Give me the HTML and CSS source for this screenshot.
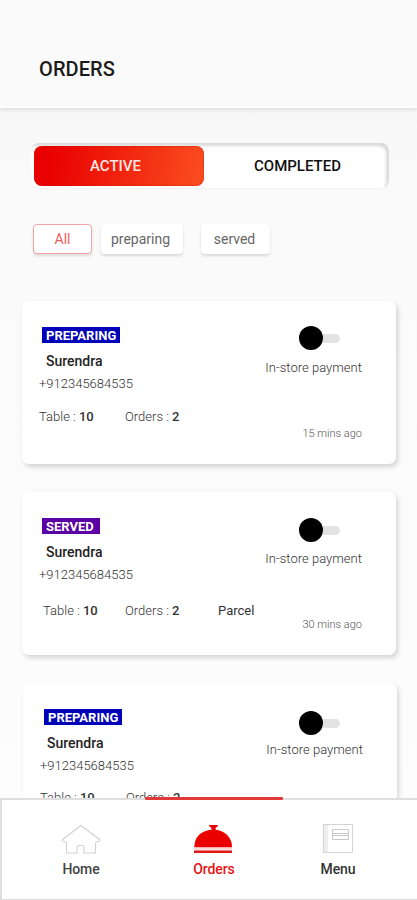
FILE: index.html
```html
<!DOCTYPE html>
<html lang="en">
<head>
<meta charset="utf-8">
<title>Orders</title>
<link rel="stylesheet" href="styles.css">
</head>
<body>
<div class="app">
  <header class="header"><h1>ORDERS</h1></header>
  <main class="content">
    <div class="tabs">
      <button class="tab active">ACTIVE</button>
      <button class="tab">COMPLETED</button>
    </div>
    <div class="filters">
      <button class="chip all">All</button>
      <button class="chip preparing">preparing</button>
      <button class="chip served">served</button>
    </div>
    <div class="cards">
      <article class="card">
        <div class="top">
          <div class="who">
            <span class="badge">PREPARING</span>
            <div class="name">Surendra</div>
            <div class="phone">+912345684535</div>
          </div>
          <div class="pay">
            <div class="toggle"><i class="knob"></i><i class="track"></i></div>
            <span>In-store payment</span>
          </div>
        </div>
        <div class="details"><span>Table : <b>10</b></span><span>Orders : <b>2</b></span></div>
        <div class="ago">15 mins ago</div>
      </article>
      <article class="card second">
        <div class="top">
          <div class="who">
            <span class="badge purple">SERVED</span>
            <div class="name">Surendra</div>
            <div class="phone">+912345684535</div>
          </div>
          <div class="pay">
            <div class="toggle"><i class="knob"></i><i class="track"></i></div>
            <span>In-store payment</span>
          </div>
        </div>
        <div class="details"><span>Table : <b>10</b></span><span>Orders : <b>2</b></span><span class="parcel">Parcel</span></div>
        <div class="ago">30 mins ago</div>
      </article>
      <article class="card third">
        <div class="top">
          <div class="who">
            <span class="badge">PREPARING</span>
            <div class="name">Surendra</div>
            <div class="phone">+912345684535</div>
          </div>
          <div class="pay">
            <div class="toggle"><i class="knob"></i><i class="track"></i></div>
            <span>In-store payment</span>
          </div>
        </div>
        <div class="details"><span>Table : <b>10</b></span><span>Orders : <b>2</b></span></div>
      </article>
    </div>
  </main>
  <nav class="nav">
    <a class="item home">
      <svg width="42" height="32" viewBox="0 0 42 32" fill="none" stroke="#d2d2d2" stroke-width="1.1"><path d="M21 1.500 L2.500 15.500 Q1.500 17 3.500 17.500 Q6 17.500 6.500 19 V29 H17 V23 Q17 21.500 19 21.500 H22 Q24 21.500 24 23 V29 H35.500 V19 Q36 17.500 38.500 17.500 Q40.500 17 39.500 15.500 Z"/></svg>
      <span>Home</span>
    </a>
    <a class="item current">
      <svg width="42" height="32" viewBox="0 0 42 32" fill="#eb0000"><path d="M16 1 H25 Q25 3 22.600 3.800 V5.800 C31 6.800 37 12 38.600 19 Q39 21.500 39 23.500 H1.200 Q1.200 21.500 1.800 19 C3 12 9 6.800 18.400 5.800 V3.800 Q16 3 16 1 Z"/><rect x="1" y="23.500" width="38" height="3" fill="#f9dcda"/><rect x="1" y="26.500" width="38" height="2.500" fill="#dc1a14"/></svg>
      <span>Orders</span>
    </a>
    <a class="item menu">
      <svg width="42" height="32" viewBox="0 0 42 32" fill="none" stroke="#d4d4d4"><rect x="7" y="0.500" width="4" height="28" fill="#eee" stroke="none"/><path d="M6 0.500 H35.500 V28.500 H6 M6.500 0.500 V29"/><path stroke="#c8c8c8" d="M15.500 5.500 H31.500 V15.500 H15.500 Z M15.500 9.500 H31.500 M15.500 11.500 H31.500"/></svg>
      <span>Menu</span>
    </a>
    <i class="marker"></i>
  </nav>
</div>
</body>
</html>
```

FILE: styles.css
```css
* { box-sizing: border-box; }
body { margin: 0; font-family: Roboto, sans-serif; background: #fafafa; }
button { border: 0; background: none; padding: 0; font-family: inherit; }
.app { width: 417px; height: 900px; display: flex; flex-direction: column; overflow: hidden; background: #fafafa; }
.header { position: relative; z-index: 1; background: #fafafa; height: 108px; flex: none; padding: 57px 0 0 39px; border-bottom: 2px solid #fff; box-shadow: 0 1px 5px rgba(0,0,0,.14); }
h1 { margin: 0; font-size: 20px; line-height: 24px; font-weight: 500; color: #1b1b1b; letter-spacing: .1px; }
.content { flex: 1; min-height: 0; overflow: hidden; padding: 35px 0 0; background: linear-gradient(#f7f7f7, #fafafa 60px, #fafafa 180px, #fdfdfd); }
.tabs { margin-left: 31px; width: 358px; height: 45px; padding: 3px; display: flex; background: #fff; border-radius: 8px; box-shadow: inset -3px 3px 3px #dadada, 0 1px 2px #f1f1f1; }
.tab { flex: 1; font-size: 15px; font-weight: 500; color: #111; line-height: 40px; padding-left: 5px; letter-spacing: 0; }
.tab.active { flex: none; width: 170px; height: 40px; padding: 0 7px 0 0; border-radius: 8px; color: #ffe9e5; background: linear-gradient(100deg, #e90000 10%, #fb4e20); box-shadow: inset 0 0 2px #c31a08; }
.filters { margin: 36px 0 0 33px; display: flex; height: 30px; }
.chip { height: 30px; border-radius: 4px; background: #fff; color: #666; font-size: 14px; font-weight: 400; line-height: 28px; box-shadow: 0 2px 3px rgba(0,0,0,.13); }
.all { width: 59px; color: #ec5c60; border: 1px solid #f2a4a8; }
.preparing { width: 82px; margin-left: 9px; padding-right: 3px; }
.served { width: 69px; margin-left: 18px; padding-right: 2px; }
.cards { padding: 47px 0 0 22px; display: flex; flex-direction: column; gap: 28px; }
.card { flex: none; width: 374px; height: 163px; padding: 25px 34px 0 17px; background: #fff; border-radius: 7px; box-shadow: 2px 3px 5px rgba(0,0,0,.16); }
.top { display: flex; justify-content: space-between; height: 67px; }
.badge { display: block; width: 78px; height: 16px; margin: 1px 0 0 3px; padding-left: 4px; background: #0000b9; color: #fff; font-size: 13px; line-height: 17px; font-weight: 700; white-space: nowrap; }
.badge.purple { width: 58px; background: #5b00a5; }
.name { margin: 7px 0 0 7px; font-size: 14px; line-height: 22px; font-weight: 500; color: #222; }
.phone { padding-top: 1px; font-size: 13px; line-height: 22px; font-weight: 300; color: #333; }
.pay { font-size: 13px; font-weight: 300; color: #333; line-height: 18px; letter-spacing: .03px; }
.toggle { display: flex; align-items: center; height: 24px; margin: 0 0 9px 34px; }
.knob { width: 24px; height: 24px; border-radius: 50%; background: #000; }
.track { width: 17px; height: 9px; border-radius: 0 5px 5px 0; background: #e3e3e3; }
.details { display: flex; margin-top: 14px; font-size: 13px; line-height: 20px; font-weight: 300; color: #333; }
.details span { width: 86px; white-space: nowrap; }
.details b { font-weight: 500; color: #333; }
.details .parcel { width: auto; margin-left: 7px; font-weight: 400; color: #333; }
.ago { text-align: right; font-size: 11px; line-height: 14px; font-weight: 300; color: #555; }
.second .toggle { margin-top: 1px; margin-bottom: 8px; }
.second .details { margin-top: 17px; }
.second .details span:first-child { width: 82px; margin-left: 4px; }
.second .ago { margin-top: -3px; }
.third { margin-left: 1px; }
.third .badge { margin-left: 4px; }
.third .toggle { margin: 3px 0 6px 33px; }
.third .details { margin-top: 13px; }
.nav { position: relative; z-index: 1; flex: none; height: 102px; padding: 24px 0 0; display: flex; background: #fff; border: solid #dedede; border-width: 2px 0 1px 2px; }
.item { display: flex; flex-direction: column; align-items: center; font-size: 14px; line-height: 18px; font-weight: 500; color: #444; letter-spacing: -.1px; }
.item svg { margin-bottom: 4px; }
.home { margin-left: 58px; }
.current { margin-left: 91px; color: #e41313; }
.menu { margin-left: 82px; color: #333; }
.marker { position: absolute; left: 143px; top: -3px; width: 138px; height: 3px; border-radius: 1px; background: #e13a3a; }
```
